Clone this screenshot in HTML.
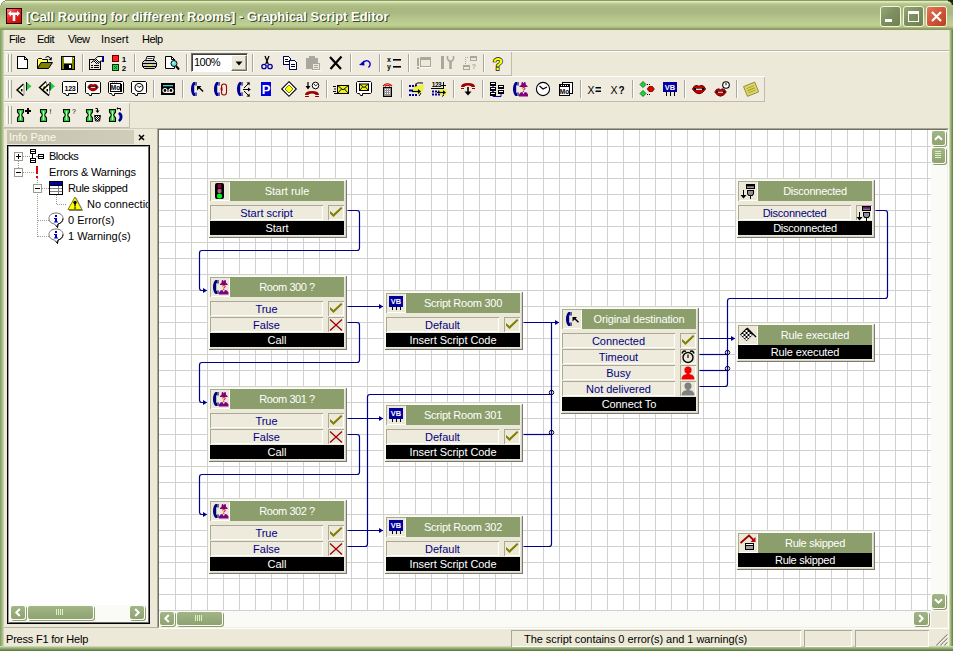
<!DOCTYPE html>
<html><head><meta charset="utf-8"><title>Graphical Script Editor</title>
<style>
*{box-sizing:border-box;margin:0;padding:0}
html,body{width:953px;height:651px;overflow:hidden}
body{position:relative;background:#ECE9D8;font-family:"Liberation Sans",sans-serif;font-size:11px;color:#000}
.abs{position:absolute}
div,svg,span{position:absolute}
svg{display:block;overflow:visible}
#title{left:0;top:0;width:953px;height:30px;background:linear-gradient(#8A9A66 0px,#8A9A66 1px,#E3F0BE 1px,#DDEAB6 2px,#C2D09A 3px,#B2C188 5px,#A9B880 8px,#A8BA81 13px,#B2C48B 17px,#BACA8E 21px,#BFD095 25px,#B4C484 27px,#A0AF72 28px,#8A9A60 29px,#8A9A60 30px)}
#ttext{left:26px;top:8px;height:17px;line-height:17px;white-space:nowrap;font-weight:bold;font-size:13px;color:#fff;text-shadow:1px 1px 0 #3f4c22,1px 0 0 rgba(63,76,34,.5);letter-spacing:0px}
.wb{top:6px;width:21px;height:21px;border:1px solid #F4F6DC;border-radius:3px;background:linear-gradient(135deg,#96A678 0%,#7F9060 45%,#6F8052 100%)}
#bclose{background:linear-gradient(135deg,#E2775A 0%,#D0553A 50%,#B8401F 100%)}
#bl{left:0;top:30px;width:4px;height:621px;background:linear-gradient(90deg,#7F9860 0,#90AA70 1px,#A4BA84 2px,#B4C696 3px,#D8E0C0 4px)}
#br{left:948px;top:30px;width:5px;height:621px;background:linear-gradient(90deg,#F2F4DE 0,#E4EACB 1px,#B9CA98 2px,#94AC72 3px,#7A955A 4px,#5F7A45 5px)}
#bb{left:0;top:646px;width:953px;height:5px;background:linear-gradient(#E4E8D0 0,#B4C696 1px,#9CB47C 2px,#86A066 3px,#6C8850 4px,#58723F 5px)}
.mi{top:29px;height:20px;line-height:20px;white-space:nowrap}
.hl{height:1px;left:4px;width:945px}
.vl{width:1px;background:#BFBCAB}
.grip{width:3px;height:18px;border-left:1px solid #fff;border-right:1px solid #ACA899;}
.sep{width:2px;height:18px;border-left:1px solid #ACA899;border-right:1px solid #fff}
.ti{width:16px;height:16px}
#canvas{left:160px;top:131px;width:771px;height:480px;background-color:#fff;
 background-image:linear-gradient(90deg,#D0D0D0 1px,transparent 1px),linear-gradient(#D0D0D0 1px,transparent 1px);background-size:16px 16px;background-position:-1px -1px;overflow:hidden}
.blk{width:139px;background:#ECE9D8;box-shadow:inset 1px 1px 0 #F7F8EC,inset -1px -1px 0 #7A7A72,inset 2px 2px 0 #FCFCF2,inset -2px -2px 0 #D8D5C4}
.blk div{position:absolute}
.bi{left:2px;top:2px;width:20px;height:20px;box-shadow:inset 1px 1px 0 #ACA899,inset -1px -1px 0 #fff}
.bh{left:22px;top:2px;width:114px;height:20px;background:#8B9E6B;color:#fff;text-align:center;line-height:20px;white-space:nowrap}
.br{left:2px;width:113px;height:15px;box-shadow:inset 1px 1px 0 #ACA899,inset -1px -1px 0 #fff;color:#000080;text-align:center;line-height:17px;white-space:nowrap;background:#EEEBDC}
.bc{left:120px;width:16px;height:15px;box-shadow:inset 1px 1px 0 #ACA899,inset -1px -1px 0 #fff}
.bf{left:2px;width:134px;height:14px;background:#000;color:#fff;text-align:center;line-height:14px;white-space:nowrap}
#conn path{fill:none;stroke:#00008C;stroke-width:1.2}
#conn .ah{fill:#00008C}
#conn .jd{fill:none;stroke:#000030;stroke-width:1}
.sb{background:#FAFAF6}
.sbtn{border-radius:3px;border:1px solid #FCFDF4;background:linear-gradient(#A3B686,#98AB7A 50%,#8FA270);box-shadow:1px 1px 0 #8C9C70}
.tr{height:16px;line-height:16px;white-space:nowrap}
.sp{top:630px;height:17px;box-shadow:inset 1px 1px 0 #ACA899,inset -1px -1px 0 #fff}
</style></head><body>
<!-- window frame -->
<div id="title"></div>
<svg style="left:0;top:0" width="6" height="6" shape-rendering="crispEdges"><rect x="0" y="0" width="5" height="1" fill="#fff"/><rect x="0" y="1" width="3" height="1" fill="#fff"/><rect x="0" y="2" width="2" height="1" fill="#fff"/><rect x="0" y="3" width="1" height="2" fill="#fff"/><rect x="3" y="1" width="2" height="1" fill="#8A9A66"/><rect x="2" y="2" width="1" height="1" fill="#8A9A66"/><rect x="1" y="3" width="1" height="2" fill="#8A9A66"/></svg>
<svg style="left:947px;top:0" width="6" height="6" shape-rendering="crispEdges"><rect x="1" y="0" width="5" height="1" fill="#1c2410"/><rect x="3" y="1" width="3" height="1" fill="#1c2410"/><rect x="4" y="2" width="2" height="1" fill="#1c2410"/><rect x="5" y="3" width="1" height="2" fill="#1c2410"/><rect x="1" y="1" width="2" height="1" fill="#7A8A56"/><rect x="3" y="2" width="1" height="1" fill="#7A8A56"/><rect x="4" y="3" width="1" height="2" fill="#7A8A56"/></svg>
<svg style="left:6px;top:8px" width="16" height="16" viewBox="0 0 16 16"><defs><linearGradient id="ig" x1="0" y1="0" x2="1" y2="1"><stop offset="0" stop-color="#f88080"/><stop offset=".45" stop-color="#e82020"/><stop offset="1" stop-color="#c80808"/></linearGradient></defs><rect width="16" height="16" fill="#200000"/><rect x="1" y="1" width="14" height="14" fill="url(#ig)"/><path d="M2 5.5 L5 2.5 L5 4.5 L11 4.5 L11 2.5 L14 5.5 L11 8.5 L11 7 L9.3 7 L9.3 13 L6.7 13 L6.7 7 L5 7 L5 8.5 Z" fill="#fff"/></svg>
<div id="ttext">[Call Routing for different Rooms] - Graphical Script Editor</div>
<div class="wb" style="left:880px"><svg width="19" height="19" style="left:0;top:0"><rect x="4" y="12" width="7" height="3" fill="#fff"/></svg></div>
<div class="wb" style="left:903px"><svg width="19" height="19" style="left:0;top:0"><rect x="4.5" y="4.5" width="10" height="10" fill="none" stroke="#fff" stroke-width="1"/><rect x="4" y="4" width="11" height="3" fill="#fff"/></svg></div>
<div class="wb" id="bclose" style="left:926px"><svg width="19" height="19" style="left:0;top:0"><path d="M5 5 L14 14 M14 5 L5 14" stroke="#fff" stroke-width="2.2"/></svg></div>
<div id="bl"></div><div id="br"></div><div id="bb"></div>

<!-- menu -->
<div class="mi" style="left:9px;letter-spacing:-0.4px">File</div>
<div class="mi" style="left:37px;letter-spacing:-0.5px">Edit</div>
<div class="mi" style="left:68px;letter-spacing:-0.6px">View</div>
<div class="mi" style="left:101px">Insert</div>
<div class="mi" style="left:142px;letter-spacing:-0.5px">Help</div>
<div class="hl" style="top:50px;background:#B8B5A4"></div>
<div class="hl" style="top:51px;background:#fff"></div>

<!-- toolbars -->
<div style="left:4px;top:52px;width:507px;height:23px;background:#EFECDF"></div>
<div style="left:4px;top:77px;width:760px;height:24px;background:#EFECDF"></div>
<div style="left:4px;top:103px;width:125px;height:24px;background:#EFECDF"></div>
<div class="hl" style="top:75px;width:508px;background:#BFBCAB"></div><div class="hl" style="top:76px;width:761px;background:#fff"></div>
<div class="hl" style="top:101px;width:761px;background:#BFBCAB"></div><div class="hl" style="top:102px;width:126px;background:#fff"></div>
<div class="hl" style="top:127px;width:126px;background:#BFBCAB"></div><div class="hl" style="top:128px;width:154px;background:#CFCCBC"></div>
<div class="vl" style="left:511px;top:52px;height:23px"></div>
<div class="vl" style="left:764px;top:77px;height:24px"></div>
<div class="vl" style="left:129px;top:103px;height:24px"></div>
<div class="grip" style="left:6px;top:54px"></div><div class="grip" style="left:9px;top:54px"></div>
<div class="grip" style="left:6px;top:80px"></div><div class="grip" style="left:9px;top:80px"></div>
<div class="grip" style="left:6px;top:106px"></div><div class="grip" style="left:9px;top:106px"></div>
<svg class="ti" width="16" height="16" viewBox="0 0 16 16" style="left:14px;top:55px" shape-rendering="crispEdges"><path d="M3.5 1.5 L10.5 1.5 L13.5 4.5 L13.5 13.5 L3.5 13.5 Z" fill="#fff" stroke="#000"/><path d="M10.5 1.5 L10.5 4.5 L13.5 4.5" fill="none" stroke="#000"/></svg>
<svg class="ti" width="16" height="16" viewBox="0 0 16 16" style="left:37px;top:55px"><path d="M0.5 13.5 L0.5 4.5 L1.5 3.5 L4.5 3.5 L5.5 4.5 L10.5 4.5 L10.5 7.5" fill="#ffff60" stroke="#000"/><path d="M0.5 13.5 L4 7.5 L15.5 7.5 L11.5 13.5 Z" fill="#808000" stroke="#000"/><path d="M8.5 2.5 Q11 0 13.5 3" fill="none" stroke="#000"/><path d="M15 2 L14.5 5.5 L11.5 4.5 Z" fill="#000"/></svg>
<svg class="ti" width="16" height="16" viewBox="0 0 16 16" style="left:60px;top:55px" shape-rendering="crispEdges"><rect x="1" y="1" width="14" height="14" fill="#000"/><rect x="2" y="2" width="12" height="12" fill="#808000"/><rect x="4" y="2" width="8" height="6" fill="#fff"/><rect x="4" y="9" width="8" height="5" fill="#000"/><rect x="9" y="10" width="2" height="3" fill="#fff"/><rect x="13" y="3" width="1" height="1" fill="#fff"/></svg>
<div class="sep" style="left:82px;top:54px"></div>
<svg class="ti" width="16" height="16" viewBox="0 0 16 16" style="left:89px;top:55px"><rect x="0.500" y="4.500" width="11" height="10" fill="#ECE9D8" stroke="#000"/><rect x="2" y="10" width="2" height="1" fill="#000"/><rect x="5" y="10" width="5" height="1" fill="#000"/><rect x="2" y="12" width="2" height="1" fill="#000"/><rect x="5" y="12" width="5" height="1" fill="#000"/><rect x="2" y="7" width="1" height="1" fill="#000"/><rect x="3" y="6" width="1" height="1" fill="#000"/><path d="M3.500 7 L7.500 2.500 L13 2.500 L13 6 L11.500 6 L9 9 Z" fill="#fff"/><path d="M3.500 7 L7.500 2.500 L9 1.500 L13 1.500 M9 9 L11.500 6 L13 6" fill="none" stroke="#000"/><rect x="7" y="4" width="1" height="1" fill="#000"/><rect x="6" y="5" width="1" height="1" fill="#000"/><rect x="8" y="5" width="1" height="1" fill="#000"/><rect x="5" y="6" width="1" height="1" fill="#000"/><rect x="7" y="6" width="1" height="1" fill="#000"/><rect x="9" y="6" width="1" height="1" fill="#000"/><rect x="6" y="7" width="1" height="1" fill="#000"/><rect x="8" y="7" width="1" height="1" fill="#000"/><rect x="7" y="8" width="1" height="1" fill="#000"/><rect x="13" y="1" width="2" height="6" fill="#000080"/></svg>
<svg class="ti" width="16" height="16" viewBox="0 0 16 16" style="left:112px;top:55px"><g shape-rendering="crispEdges"><rect x="0" y="0" width="7" height="7" fill="#600000"/><rect x="1" y="1" width="5" height="5" fill="#ff2020"/><rect x="0" y="9" width="7" height="7" fill="#003000"/><rect x="1" y="10" width="5" height="5" fill="#30d050"/></g><path d="M2 11 L5 14 M5 11 L2 14" stroke="#006010" stroke-width="1"/><text x="12" y="7" font-size="8" font-weight="bold" fill="#000" text-anchor="middle" font-family="Liberation Sans, sans-serif" >1</text><text x="12" y="16" font-size="8" font-weight="bold" fill="#000" text-anchor="middle" font-family="Liberation Sans, sans-serif" >2</text></svg>
<div class="sep" style="left:134px;top:54px"></div>
<svg class="ti" width="16" height="16" viewBox="0 0 16 16" style="left:141px;top:55px"><path d="M4.5 6 L6 1.5 L13.5 1.5 L12 6" fill="#fff" stroke="#000"/><path d="M1.5 7.5 L3.5 5.5 L13.5 5.5 L15.5 7.5 L15.5 11.5 L13.5 13.5 L3.5 13.5 L1.5 11.5 Z" fill="#c8c8c0" stroke="#000"/><path d="M1.5 8.5 L15.5 8.5 M2 11.5 L15 11.5" stroke="#000"/><rect x="7" y="9.6" width="4" height="1" fill="#ffff00"/><path d="M6.5 3.5 L11.5 3.5" stroke="#000" stroke-width=".8"/></svg>
<svg class="ti" width="16" height="16" viewBox="0 0 16 16" style="left:164px;top:55px"><path d="M1.5 1.5 L7.5 1.5 L10.5 4.5 L10.5 13.5 L1.5 13.5 Z" fill="#fff" stroke="#000"/><path d="M7.5 1.5 L7.5 4.5 L10.5 4.5" fill="none" stroke="#000"/><circle cx="10" cy="8.5" r="3" fill="#60e0e0" stroke="#000"/><circle cx="9.3" cy="7.8" r="1" fill="#c0ffff"/><path d="M12 11 L15 14.5" stroke="#000" stroke-width="2"/></svg>
<div class="sep" style="left:186px;top:54px"></div>
<div class="sep" style="left:252px;top:54px"></div>
<svg class="ti" width="16" height="16" viewBox="0 0 16 16" style="left:259px;top:55px"><path d="M6 1 L9.2 9 M10 1 L6.8 9" stroke="#000" stroke-width="1.3" fill="none"/><circle cx="5" cy="11.5" r="2.2" fill="none" stroke="#0000a0" stroke-width="1.3"/><circle cx="11" cy="11.5" r="2.2" fill="none" stroke="#0000a0" stroke-width="1.3"/></svg>
<svg class="ti" width="16" height="16" viewBox="0 0 16 16" style="left:282px;top:55px" shape-rendering="crispEdges"><path d="M1.5 1.5 L6.5 1.5 L8.5 3.5 L8.5 9.5 L1.5 9.5 Z" fill="#fff" stroke="#000060"/><path d="M7.5 5.5 L12.5 5.5 L14.5 7.5 L14.5 14.5 L7.5 14.5 Z" fill="#fff" stroke="#000060"/><rect x="3" y="4" width="3" height="1" fill="#000"/><rect x="3" y="6" width="4" height="1" fill="#000"/><rect x="9" y="9" width="4" height="1" fill="#000"/><rect x="9" y="11" width="4" height="1" fill="#000"/></svg>
<svg class="ti" width="16" height="16" viewBox="0 0 16 16" style="left:305px;top:55px" shape-rendering="crispEdges"><rect x="1" y="3" width="12" height="11" fill="#a8a8a0"/><rect x="4" y="1" width="6" height="3" fill="#a8a8a0"/><rect x="7" y="8" width="8" height="7" fill="#a8a8a0"/><rect x="8" y="9" width="6" height="5" fill="#ECE9D8"/><rect x="9" y="10" width="4" height="1" fill="#a8a8a0"/><rect x="9" y="12" width="4" height="1" fill="#a8a8a0"/><rect x="8" y="15" width="8" height="1" fill="#fff"/></svg>
<svg class="ti" width="16" height="16" viewBox="0 0 16 16" style="left:328px;top:55px"><path d="M2 2 L13 14 M13.5 1.5 L2.5 14" stroke="#000" stroke-width="2.2" fill="none"/></svg>
<div class="sep" style="left:350px;top:54px"></div>
<svg class="ti" width="16" height="16" viewBox="0 0 16 16" style="left:357px;top:55px"><path d="M5 8.500 Q9.500 3.500 12.800 7.500 Q14 10 11.500 12.500" fill="none" stroke="#0000c0" stroke-width="1.300"/><path d="M2 10 L7 5.500 L7.500 10.500 Z" fill="#0000c0"/></svg>
<div class="sep" style="left:379px;top:54px"></div>
<svg class="ti" width="16" height="16" viewBox="0 0 16 16" style="left:386px;top:55px"><text x="3" y="7" font-size="7" font-weight="bold" fill="#000" text-anchor="middle" font-family="Liberation Sans, sans-serif" >x</text><text x="3" y="14" font-size="7" font-weight="bold" fill="#000" text-anchor="middle" font-family="Liberation Sans, sans-serif" >y</text><rect x="7" y="4" width="8" height="1.6" fill="#000"/><rect x="7" y="11" width="8" height="1.6" fill="#000"/></svg>
<div class="sep" style="left:408px;top:54px"></div>
<svg class="ti" width="16" height="16" viewBox="0 0 16 16" style="left:416px;top:55px" shape-rendering="crispEdges"><rect x="4" y="2" width="11" height="10" fill="#ACA899"/><rect x="5" y="5" width="9" height="6" fill="#ECE9D8"/><rect x="1" y="3" width="2" height="8" fill="#ACA899"/><rect x="1" y="12" width="2" height="2" fill="#ACA899"/><rect x="5" y="12" width="11" height="1" fill="#fff"/></svg>
<svg class="ti" width="16" height="16" viewBox="0 0 16 16" style="left:439px;top:55px"><path d="M3.5 1 L3.5 6 M3.5 6 L3.5 14" stroke="#ACA899" stroke-width="3"/><path d="M11.5 6 L11.5 14" stroke="#ACA899" stroke-width="2.6"/><path d="M8.5 1 L8.5 4 L10 6 L13 6 L14.5 4 L14.5 1" fill="none" stroke="#ACA899" stroke-width="1.6"/></svg>
<svg class="ti" width="16" height="16" viewBox="0 0 16 16" style="left:462px;top:55px" shape-rendering="crispEdges"><rect x="8" y="1" width="7" height="5" fill="#ACA899"/><rect x="9" y="3" width="5" height="2" fill="#ECE9D8"/><rect x="1" y="10" width="7" height="5" fill="#ACA899"/><rect x="2" y="12" width="5" height="2" fill="#ECE9D8"/><rect x="3" y="2" width="1" height="1" fill="#ACA899"/><rect x="5" y="2" width="1" height="1" fill="#ACA899"/><rect x="3" y="4" width="1" height="1" fill="#ACA899"/><rect x="3" y="6" width="1" height="1" fill="#ACA899"/><rect x="3" y="8" width="1" height="1" fill="#ACA899"/><text x="12" y="14" font-size="7" font-weight="bold" fill="#ACA899" text-anchor="middle" font-family="Liberation Sans, sans-serif" >?</text></svg>
<div class="sep" style="left:483px;top:54px"></div>
<svg class="ti" width="16" height="16" viewBox="0 0 16 16" style="left:490px;top:55px"><text x="8" y="14.5" font-size="17" font-weight="bold" fill="#ffff00" stroke="#000" stroke-width="1.3" paint-order="stroke" text-anchor="middle" font-family="Liberation Sans, sans-serif">?</text></svg>
<svg class="ti" width="16" height="16" viewBox="0 0 16 16" style="left:16px;top:81px"><path d="M1 9 L7.5 3 L7.5 14.6 Z" fill="#f4f4a8"/><path d="M4.8 5.6 L7.5 3 L7.5 14.6 L4.8 12.2 Z" fill="#fff"/><path d="M7.5 3 L1 9 L7.5 14.6" fill="none" stroke="#000" stroke-width="1.400"/><path d="M8 3.5 L8 14" stroke="#909090" stroke-width="1"/><rect x="5" y="8" width="1.5" height="2.4" fill="#000"/><path d="M10.5 1 L15.5 5.300 L10.5 9.600 Z" fill="#20d040"/><path d="M10.5 1 L10.5 9.600" stroke="#000" stroke-width="1"/></svg>
<svg class="ti" width="16" height="16" viewBox="0 0 16 16" style="left:39px;top:81px"><path d="M0.5 6.5 L7.0 0.5 L7.0 12.1 Z" fill="#f4f4a8"/><path d="M4.3 3.0999999999999996 L7.0 0.5 L7.0 12.1 L4.3 9.7 Z" fill="#fff"/><path d="M7.0 0.5 L0.5 6.5 L7.0 12.1" fill="none" stroke="#000" stroke-width="1.400"/><path d="M7.5 1.0 L7.5 11.5" stroke="#909090" stroke-width="1"/><rect x="4.5" y="5.5" width="1.5" height="2.4" fill="#000"/><path d="M3.5 9 L10.0 3 L10.0 14.6 Z" fill="#f4f4a8"/><path d="M7.3 5.6 L10.0 3 L10.0 14.6 L7.3 12.2 Z" fill="#fff"/><path d="M10.0 3 L3.5 9 L10.0 14.6" fill="none" stroke="#000" stroke-width="1.400"/><path d="M10.5 3.5 L10.5 14" stroke="#909090" stroke-width="1"/><rect x="7.5" y="8" width="1.5" height="2.4" fill="#000"/><path d="M11 1 L16 5.300 L11 9.600 Z" fill="#20d040"/><path d="M11 1 L11 9.600" stroke="#000" stroke-width="1"/></svg>
<svg class="ti" width="16" height="16" viewBox="0 0 16 16" style="left:62px;top:81px"><path d="M1.5 0.5 L14.5 0.5 L15.5 1.5 L15.5 11.5 L14.5 12.5 L6.5 12.5 L6.5 14.5 L4.5 14.5 L3.5 12.5 L1.5 12.5 L0.5 11.5 L0.5 1.5 Z" fill="#fff" stroke="#000" stroke-width="1"/><text x="8" y="9.5" font-size="7" font-weight="bold" fill="#000" text-anchor="middle" font-family="Liberation Sans, sans-serif" letter-spacing="-0.3">123</text></svg>
<svg class="ti" width="16" height="16" viewBox="0 0 16 16" style="left:85px;top:81px"><path d="M1.5 0.5 L14.5 0.5 L15.5 1.5 L15.5 11.5 L14.5 12.5 L6.5 12.5 L6.5 14.5 L4.5 14.5 L3.5 12.5 L1.5 12.5 L0.5 11.5 L0.5 1.5 Z" fill="#fff" stroke="#000" stroke-width="1"/><g transform="translate(8,6.2) scale(0.95)"><path d="M-5.5 0 Q-4 -3.5 -1.5 -3 L0 -2.2 L1.5 -3 Q4 -3.5 5.5 0 Q3 4 0 4 Q-3 4 -5.5 0 Z" fill="#c00000" stroke="#600000" stroke-width=".8"/><path d="M-4 0 L4 0" stroke="#000" stroke-width="1.6"/><path d="M-2.5 0.2 L2.5 0.2" stroke="#fff" stroke-width="1"/></g></svg>
<svg class="ti" width="16" height="16" viewBox="0 0 16 16" style="left:108px;top:81px"><path d="M1.5 0.5 L14.5 0.5 L15.5 1.5 L15.5 11.5 L14.5 12.5 L6.5 12.5 L6.5 14.5 L4.5 14.5 L3.5 12.5 L1.5 12.5 L0.5 11.5 L0.5 1.5 Z" fill="#fff" stroke="#000" stroke-width="1"/><rect x="2.5" y="2.5" width="10" height="8" fill="none" stroke="#000"/><rect x="4" y="1.6" width="1" height="1" fill="#000"/><rect x="6" y="1.6" width="1" height="1" fill="#000"/><rect x="8" y="1.6" width="1" height="1" fill="#000"/><rect x="13" y="3" width="1" height="8" fill="#000"/><text x="7.5" y="9.3" font-size="6.5" font-weight="bold" fill="#000" text-anchor="middle" font-family="Liberation Sans, sans-serif" >Mo</text></svg>
<svg class="ti" width="16" height="16" viewBox="0 0 16 16" style="left:131px;top:81px"><path d="M1.5 0.5 L14.5 0.5 L15.5 1.5 L15.5 11.5 L14.5 12.5 L6.5 12.5 L6.5 14.5 L4.5 14.5 L3.5 12.5 L1.5 12.5 L0.5 11.5 L0.5 1.5 Z" fill="#fff" stroke="#000" stroke-width="1"/><circle cx="8" cy="6.5" r="4" fill="#fff" stroke="#000" stroke-width="1.1"/><path d="M6 4.5 L8 6.5 L10.5 5" fill="none" stroke="#000" stroke-width="1"/></svg>
<div class="sep" style="left:153px;top:80px"></div>
<svg class="ti" width="16" height="16" viewBox="0 0 16 16" style="left:160px;top:81px"><rect x="1" y="2" width="14" height="12" fill="#000"/><rect x="3" y="4" width="10" height="1.3" fill="#40d0d0"/><circle cx="5" cy="9.5" r="2" fill="#000" stroke="#fff" stroke-width="1.2"/><circle cx="11" cy="9.5" r="2" fill="#000" stroke="#fff" stroke-width="1.2"/><rect x="5" y="11" width="6" height="1" fill="#fff"/></svg>
<div class="sep" style="left:182px;top:80px"></div>
<svg class="ti" width="16" height="16" viewBox="0 0 16 16" style="left:189px;top:81px"><path d="M6 1 L4.500 1 C1.200 3.500 1.200 12.500 4.500 15 L6 15 L6 12.200 L5.200 11.200 L5.200 4.800 L6 3.800 Z" fill="#000090"/><rect x="6.4" y="1" width="1.2" height="3.6" fill="#000090"/><rect x="6.4" y="11.4" width="1.2" height="3.6" fill="#000090"/><path d="M8 5 L12.5 5 L11 6.5 L14.6 10.1 L13.6 11.1 L10 7.5 L8 9.5 Z" fill="#000"/></svg>
<svg class="ti" width="16" height="16" viewBox="0 0 16 16" style="left:212px;top:81px"><path d="M6 1 L4.500 1 C1.200 3.500 1.200 12.500 4.500 15 L6 15 L6 12.200 L5.200 11.200 L5.200 4.800 L6 3.800 Z" fill="#000090"/><rect x="6.4" y="1" width="1.2" height="3.6" fill="#000090"/><rect x="6.4" y="11.4" width="1.2" height="3.6" fill="#000090"/><rect x="9.5" y="3" width="5" height="11" rx="2.5" fill="none" stroke="#a00000" stroke-width="1.1"/><path d="M8 8 L10.5 6 L10.5 10 Z" fill="#a00000"/></svg>
<svg class="ti" width="16" height="16" viewBox="0 0 16 16" style="left:235px;top:81px"><path d="M6 1 L4.500 1 C1.200 3.500 1.200 12.500 4.500 15 L6 15 L6 12.200 L5.200 11.200 L5.200 4.800 L6 3.800 Z" fill="#000090"/><rect x="6.4" y="1" width="1.2" height="3.6" fill="#000090"/><rect x="6.4" y="11.4" width="1.2" height="3.6" fill="#000090"/><path d="M8 8.5 L14.5 8.5 M9 7 L14 2 M9 10 L14 15" stroke="#000" stroke-width="1" fill="none"/><path d="M15.8 8.5 L13 6.5 L13 10.5 Z M14.8 1.2 L11.5 1.5 L14.5 4.5 Z M14.8 15.8 L11.5 15.5 L14.5 12.5 Z" fill="#000"/></svg>
<svg class="ti" width="16" height="16" viewBox="0 0 16 16" style="left:258px;top:81px"><rect x="3" y="1" width="10" height="14" fill="#0000e0"/><text x="8.2" y="12.5" font-size="13" font-weight="bold" fill="#fff" text-anchor="middle" font-family="Liberation Sans, sans-serif" >P</text></svg>
<svg class="ti" width="16" height="16" viewBox="0 0 16 16" style="left:281px;top:81px"><path d="M8 0.7 L15.3 8 L8 15.3 L0.7 8 Z" fill="#fff" stroke="#000" stroke-width="1.1"/><path d="M8 4 L12 8 L8 12 L4 8 Z" fill="#ffff00" stroke="#404000" stroke-width=".7"/></svg>
<svg class="ti" width="16" height="16" viewBox="0 0 16 16" style="left:304px;top:81px"><path d="M1 14 Q1 10 8 10 Q15 10 15 14 L11.5 14 Q11.5 12.4 8 12.4 Q4.500 12.4 4.5 14 Z" fill="#a00000"/><rect x="1" y="15" width="4" height="1" fill="#a00000"/><rect x="11" y="15" width="4" height="1" fill="#a00000"/><circle cx="11.5" cy="4.5" r="3.3" fill="#fff" stroke="#000" stroke-width="1"/><path d="M10 3 L11.5 4.8 L13.5 3.6" fill="none" stroke="#000" stroke-width=".9"/><path d="M4 1 L4 7" stroke="#000" stroke-width="1.2"/><path d="M1.5 5 L6.5 5 L4 8.5 Z" fill="#000"/></svg>
<div class="sep" style="left:326px;top:80px"></div>
<svg class="ti" width="16" height="16" viewBox="0 0 16 16" style="left:333px;top:81px"><rect x="4.5" y="4.5" width="11" height="8" fill="#f0f020" stroke="#000" stroke-width="1"/><path d="M4.5 4.5 L10.0 8.9 L15.5 4.5 M4.5 12.5 L8.68 7.859999999999999 M15.5 12.5 L11.32 7.859999999999999" fill="none" stroke="#000" stroke-width=".9"/><rect x="0" y="5" width="3" height="1" fill="#000"/><rect x="1" y="7.5" width="2" height="1" fill="#000"/><rect x="0" y="10" width="3" height="1" fill="#000"/><rect x="1" y="12" width="3" height="1" fill="#000"/></svg>
<svg class="ti" width="16" height="16" viewBox="0 0 16 16" style="left:356px;top:81px"><path d="M1.5 0.5 L14.5 0.5 L15.5 1.5 L15.5 11.5 L14.5 12.5 L6.5 12.5 L6.5 14.5 L4.5 14.5 L3.5 12.5 L1.5 12.5 L0.5 11.5 L0.5 1.5 Z" fill="#fff" stroke="#000" stroke-width="1"/><rect x="3.5" y="3" width="9" height="6.5" fill="#f0f020" stroke="#000" stroke-width="1"/><path d="M3.5 3 L8.0 6.575 L12.5 3 M3.5 9.5 L6.92 5.73 M12.5 9.5 L9.08 5.73" fill="none" stroke="#000" stroke-width=".9"/></svg>
<svg class="ti" width="16" height="16" viewBox="0 0 16 16" style="left:379px;top:81px"><rect x="4" y="6" width="9" height="10" fill="#000"/><rect x="5" y="7" width="7" height="8" fill="#909090"/><rect x="6" y="8" width="1" height="1" fill="#fff"/><rect x="6" y="10" width="1" height="1" fill="#fff"/><rect x="6" y="12" width="1" height="1" fill="#fff"/><rect x="8" y="8" width="1" height="1" fill="#fff"/><rect x="8" y="10" width="1" height="1" fill="#fff"/><rect x="8" y="12" width="1" height="1" fill="#fff"/><rect x="10" y="8" width="1" height="1" fill="#fff"/><rect x="10" y="10" width="1" height="1" fill="#fff"/><rect x="10" y="12" width="1" height="1" fill="#fff"/><path d="M4 5 Q8.5 0.5 13 5 M6 5.5 Q8.5 3 11 5.500" fill="none" stroke="#c00000" stroke-width="1.1"/></svg>
<div class="sep" style="left:401px;top:80px"></div>
<svg class="ti" width="16" height="16" viewBox="0 0 16 16" style="left:408px;top:81px"><rect x="1" y="4" width="2" height="2" fill="#0000a0"/><rect x="4" y="4" width="2" height="2" fill="#0000a0"/><rect x="7" y="4" width="2" height="2" fill="#0000a0"/><rect x="1" y="13" width="2" height="2" fill="#0000a0"/><rect x="4" y="13" width="2" height="2" fill="#0000a0"/><rect x="7" y="13" width="2" height="2" fill="#0000a0"/><rect x="1" y="8.5" width="5" height="2" fill="#0000a0"/><path d="M7 3.500 Q9 1 15 2 M7 6 L8.500 3.500" stroke="#000" fill="none"/><path d="M6 6 L15.5 3 L15.5 9 L12 13 L9 13 L9 10 L5 10 L5 8 Z" fill="#f0f040"/><path d="M4 10.5 L11 10.5" stroke="#000" stroke-width="1.2"/><path d="M13 10.5 L10 8 L10 13 Z" fill="#000"/><path d="M11 15 L13 12" stroke="#000"/></svg>
<svg class="ti" width="16" height="16" viewBox="0 0 16 16" style="left:431px;top:81px"><text x="5.5" y="5.5" font-size="6.5" font-weight="bold" fill="#000" text-anchor="middle" font-family="Liberation Sans, sans-serif" letter-spacing="-0.4">123</text><rect x="0" y="7" width="12" height="1" fill="#000"/><rect x="12" y="1" width="1" height="10" fill="#000"/><rect x="10" y="4" width="5" height="1" fill="#000"/><rect x="1" y="9.5" width="2" height="2" fill="#0000a0"/><rect x="1" y="12.5" width="2" height="2" fill="#0000a0"/><rect x="4" y="9.5" width="2" height="2" fill="#0000a0"/><rect x="4" y="12.5" width="2" height="2" fill="#0000a0"/><rect x="7" y="9.5" width="2" height="2" fill="#0000a0"/><rect x="7" y="12.5" width="2" height="2" fill="#0000a0"/><path d="M8 8 L15.5 8 L15.5 14 L9 14 Z" fill="#f0f040"/><path d="M6 11.500 L13 11.500" stroke="#000" stroke-width="1.2"/><path d="M15 11.500 L12 9.300 L12 13.700 Z" fill="#000"/><path d="M11 15.500 L13 14" stroke="#000"/></svg>
<div class="sep" style="left:453px;top:80px"></div>
<svg class="ti" width="16" height="16" viewBox="0 0 16 16" style="left:460px;top:81px"><path d="M1 6 Q1 2 8 2 Q15 2 15 6 L11.5 6 Q11.5 4.4 8 4.4 Q4.500 4.4 4.5 6 Z" fill="#a00000"/><rect x="1" y="7" width="3" height="1" fill="#a00000"/><rect x="12" y="7" width="3" height="1" fill="#a00000"/><path d="M8 6 L8 11" stroke="#000" stroke-width="1.6"/><path d="M4.5 10.5 L11.5 10.5 L8 14.500 Z" fill="#000"/></svg>
<div class="sep" style="left:482px;top:80px"></div>
<svg class="ti" width="16" height="16" viewBox="0 0 16 16" style="left:489px;top:81px"><g shape-rendering="crispEdges"><rect x="1" y="1" width="6" height="4" fill="#000"/><rect x="2" y="2" width="4" height="1" fill="#fff"/></g><g shape-rendering="crispEdges"><rect x="1" y="6" width="6" height="4" fill="#000"/><rect x="2" y="7" width="4" height="1" fill="#fff"/></g><g shape-rendering="crispEdges"><rect x="1" y="11" width="6" height="4" fill="#000"/><rect x="2" y="12" width="4" height="1" fill="#fff"/></g><g shape-rendering="crispEdges"><rect x="9" y="4" width="6" height="4" fill="#000"/><rect x="10" y="5" width="4" height="1" fill="#fff"/></g><g shape-rendering="crispEdges"><rect x="9" y="9" width="6" height="4" fill="#000"/><rect x="10" y="10" width="4" height="1" fill="#fff"/></g><path d="M4 4.5 L4 6 M4 14.500 L4 15.500 L12 15.500 L12 13" stroke="#0000c0" fill="none"/><path d="M2.500 9.500 L5.500 9.500 L4 11.500 Z" fill="#0000c0"/></svg>
<svg class="ti" width="16" height="16" viewBox="0 0 16 16" style="left:512px;top:81px"><g transform="translate(-1,0)"><path d="M6 1 L4.500 1 C1.200 3.500 1.200 12.500 4.500 15 L6 15 L6 12.200 L5.200 11.200 L5.200 4.800 L6 3.800 Z" fill="#000090"/><rect x="6.4" y="1" width="1.2" height="3.6" fill="#000090"/><rect x="6.4" y="11.4" width="1.2" height="3.6" fill="#000090"/></g><path d="M7.500 6 L15.500 6 L15.500 5 L14 4 L13.400 1 L12.400 1 L11.600 2.500 L10.800 1 L9.800 1 L9.200 4 L7.500 5 Z" fill="#800080"/><text x="11.6" y="11.3" font-size="7" font-weight="bold" fill="#d00000" text-anchor="middle" font-family="Liberation Sans, sans-serif" >?</text><path d="M7 15.500 L7 13.500 L8.500 11.500 L10.500 11 L11.600 13.200 L12.800 11 L14.800 11.500 L16 13.500 L16 15.500 Z" fill="#800080"/></svg>
<svg class="ti" width="16" height="16" viewBox="0 0 16 16" style="left:535px;top:81px"><circle cx="8" cy="8" r="6.6" fill="#fff" stroke="#000" stroke-width="1.1"/><path d="M4.500 5 L8 8 L12 6" fill="none" stroke="#000" stroke-width="1.1"/></svg>
<svg class="ti" width="16" height="16" viewBox="0 0 16 16" style="left:558px;top:81px"><rect x="4.500" y="1.500" width="10" height="11" fill="#fff" stroke="#000"/><rect x="1.500" y="3.500" width="10" height="11" fill="#fff" stroke="#000"/><rect x="2" y="4" width="9" height="2" fill="#000"/><rect x="3" y="4" width="1" height="1" fill="#fff"/><rect x="5" y="4" width="1" height="1" fill="#fff"/><rect x="7" y="4" width="1" height="1" fill="#fff"/><rect x="9" y="4" width="1" height="1" fill="#fff"/><text x="6.5" y="13" font-size="6.5" font-weight="bold" fill="#000" text-anchor="middle" font-family="Liberation Sans, sans-serif" >Mo</text></svg>
<div class="sep" style="left:580px;top:80px"></div>
<svg class="ti" width="16" height="16" viewBox="0 0 16 16" style="left:587px;top:81px"><text x="4" y="12.5" font-size="10.5" font-weight="normal" fill="#000" text-anchor="middle" font-family="Liberation Sans, sans-serif" >X</text><rect x="8.5" y="6" width="5.5" height="1.5" fill="#000"/><rect x="8.5" y="9.5" width="5.5" height="1.5" fill="#000"/></svg>
<svg class="ti" width="16" height="16" viewBox="0 0 16 16" style="left:610px;top:81px"><text x="4" y="12.5" font-size="10.5" font-weight="normal" fill="#000" text-anchor="middle" font-family="Liberation Sans, sans-serif" >X</text><text x="11.5" y="12.5" font-size="10" font-weight="bold" fill="#000" text-anchor="middle" font-family="Liberation Sans, sans-serif" >?</text></svg>
<div class="sep" style="left:632px;top:80px"></div>
<svg class="ti" width="16" height="16" viewBox="0 0 16 16" style="left:639px;top:81px"><path d="M4 0.5 L7 3.5 L4 6.5 L1 3.5 Z" fill="#20d040" stroke="#006000" stroke-width=".8"/><path d="M4 9.5 L7 12.5 L4 15.5 L1 12.5 Z" fill="#20d040" stroke="#006000" stroke-width=".8"/><path d="M10 5.500 L13.500 5.500 L15.300 8 L13.500 10.500 L10 10.500 L8.300 8 Z" fill="#e00000" stroke="#600000" stroke-width=".8"/><rect x="8" y="3" width="1" height="1" fill="#000"/><rect x="10" y="3" width="1" height="1" fill="#000"/><rect x="8" y="13" width="1" height="1" fill="#000"/><rect x="10" y="13" width="1" height="1" fill="#000"/></svg>
<svg class="ti" width="16" height="16" viewBox="0 0 16 16" style="left:662px;top:81px"><rect x="1" y="1" width="14" height="10" fill="#0000a0"/><text x="8" y="9" font-size="7.5" font-weight="bold" fill="#fff" text-anchor="middle" font-family="Liberation Sans, sans-serif" >VB</text><rect x="4" y="11" width="1" height="4" fill="#000"/><rect x="8" y="11" width="1" height="4" fill="#000"/><rect x="12" y="11" width="1" height="4" fill="#000"/></svg>
<div class="sep" style="left:684px;top:80px"></div>
<svg class="ti" width="16" height="16" viewBox="0 0 16 16" style="left:691px;top:81px"><g transform="translate(8,8) scale(1.2)"><path d="M-5.5 0 Q-4 -3.5 -1.5 -3 L0 -2.2 L1.5 -3 Q4 -3.5 5.5 0 Q3 4 0 4 Q-3 4 -5.5 0 Z" fill="#c00000" stroke="#600000" stroke-width=".8"/><path d="M-4 0 L4 0" stroke="#000" stroke-width="1.6"/><path d="M-2.5 0.2 L2.5 0.2" stroke="#fff" stroke-width="1"/></g></svg>
<svg class="ti" width="16" height="16" viewBox="0 0 16 16" style="left:714px;top:81px"><g transform="translate(6.5,11) scale(1.05)"><path d="M-5.5 0 Q-4 -3.5 -1.5 -3 L0 -2.2 L1.5 -3 Q4 -3.5 5.5 0 Q3 4 0 4 Q-3 4 -5.5 0 Z" fill="#c00000" stroke="#600000" stroke-width=".8"/><path d="M-4 0 L4 0" stroke="#000" stroke-width="1.6"/><path d="M-2.5 0.2 L2.5 0.2" stroke="#fff" stroke-width="1"/></g><circle cx="12" cy="4" r="3.300" fill="#fff" stroke="#000" stroke-width="1.100"/><path d="M12 2 L12 4.300" stroke="#000" stroke-width="1"/></svg>
<div class="sep" style="left:736px;top:80px"></div>
<svg class="ti" width="16" height="16" viewBox="0 0 16 16" style="left:743px;top:81px"><g transform="rotate(-22 8 8)"><rect x="2" y="3" width="12" height="10.500" fill="#e0d860" stroke="#808040" stroke-width=".8"/><path d="M4 6 L12 6 M4 8.300 L12 8.300 M4 10.600 L12 10.600" stroke="#a09830" stroke-width=".9"/></g></svg>
<svg class="ti" width="16" height="16" viewBox="0 0 16 16" style="left:16px;top:107px"><path d="M1.500 2.500 L7.500 2.500 L7.500 5 L5.500 8 L7.500 11 L7.500 14.500 L1.500 14.500 L1.500 11 L3.500 8 L1.500 5 Z" fill="#20d030" stroke="#000" stroke-width="1.100"/><path d="M3.800 4 L5.200 4 L5.200 13 L3.800 13 Z" fill="#b0ffb0"/><rect x="9" y="3" width="6" height="2" fill="#000"/><rect x="11" y="1" width="2" height="6" fill="#000"/></svg>
<svg class="ti" width="16" height="16" viewBox="0 0 16 16" style="left:39px;top:107px"><path d="M1.500 2.500 L7.500 2.500 L7.500 5 L5.500 8 L7.500 11 L7.500 14.500 L1.500 14.500 L1.500 11 L3.500 8 L1.500 5 Z" fill="#20d030" stroke="#000" stroke-width="1.100"/><path d="M3.800 4 L5.200 4 L5.200 13 L3.800 13 Z" fill="#b0ffb0"/><text x="11.5" y="6.5" font-size="7" font-weight="normal" fill="#000" text-anchor="middle" font-family="Liberation Sans, sans-serif" >!</text></svg>
<svg class="ti" width="16" height="16" viewBox="0 0 16 16" style="left:62px;top:107px"><path d="M1.500 2.500 L7.500 2.500 L7.500 5 L5.500 8 L7.500 11 L7.500 14.500 L1.500 14.500 L1.500 11 L3.500 8 L1.500 5 Z" fill="#20d030" stroke="#000" stroke-width="1.100"/><path d="M3.800 4 L5.200 4 L5.200 13 L3.800 13 Z" fill="#b0ffb0"/><text x="12" y="6.5" font-size="7" font-weight="normal" fill="#000" text-anchor="middle" font-family="Liberation Sans, sans-serif" >?</text></svg>
<svg class="ti" width="16" height="16" viewBox="0 0 16 16" style="left:85px;top:107px"><path d="M1.500 2.500 L7.500 2.500 L7.500 5 L5.500 8 L7.500 11 L7.500 14.500 L1.500 14.500 L1.500 11 L3.500 8 L1.500 5 Z" fill="#20d030" stroke="#000" stroke-width="1.100"/><path d="M3.800 4 L5.200 4 L5.200 13 L3.800 13 Z" fill="#b0ffb0"/><path d="M9.500 8.500 L15.500 8.500 L14.500 14 L10.500 14 Z" fill="#fff" stroke="#000" stroke-width="1"/><rect x="10" y="9" width="1" height="1" fill="#000"/><rect x="12" y="9" width="1" height="1" fill="#000"/><rect x="14" y="9" width="1" height="1" fill="#000"/><rect x="11" y="10" width="1" height="1" fill="#000"/><rect x="13" y="10" width="1" height="1" fill="#000"/><rect x="10" y="11" width="1" height="1" fill="#000"/><rect x="12" y="11" width="1" height="1" fill="#000"/><rect x="14" y="11" width="1" height="1" fill="#000"/><rect x="11" y="12" width="1" height="1" fill="#000"/><rect x="13" y="12" width="1" height="1" fill="#000"/><rect x="12" y="13" width="1" height="1" fill="#000"/><path d="M10.500 1.500 L12.500 1.500 L12.500 4" stroke="#000" fill="none"/><path d="M10.500 3.500 L14.500 3.500 L12.500 6 Z" fill="#000"/></svg>
<svg class="ti" width="16" height="16" viewBox="0 0 16 16" style="left:108px;top:107px"><path d="M1.500 2.500 L7.500 2.500 L7.500 5 L5.500 8 L7.500 11 L7.500 14.500 L1.500 14.500 L1.500 11 L3.500 8 L1.500 5 Z" fill="#20d030" stroke="#000" stroke-width="1.100"/><path d="M3.800 4 L5.200 4 L5.200 13 L3.800 13 Z" fill="#b0ffb0"/><path d="M11.500 5 C15.500 6 15.500 13 11.500 15 L10 13 C12 12 12 8 10 7 Z" fill="#000090"/><path d="M9.500 1.500 L12.500 1.500 L12.500 3.500" stroke="#000" fill="none"/><path d="M10 0 L10 3 L8.500 1.500 Z" fill="#000"/></svg>
<div style="left:191px;top:53px;width:57px;height:19px;background:#fff;border:1px solid;border-color:#716F64 #fff #fff #716F64;box-shadow:inset 1px 1px 0 #404040"></div>
<div style="left:194px;top:55px;height:15px;line-height:15px;font-size:11px;letter-spacing:-0.5px">100%</div>
<div style="left:231px;top:55px;width:16px;height:16px;background:#ECE9D8;border:1px solid;border-color:#fff #716F64 #716F64 #fff;box-shadow:inset -1px -1px 0 #ACA899"></div>
<svg style="left:235px;top:61px" width="8" height="5"><path d="M0.500 0.500 L7.500 0.500 L4 4.500 Z" fill="#000"/></svg>

<!-- info pane -->
<div style="left:7px;top:130px;width:127px;height:14px;background:linear-gradient(90deg,#C5C3AB,#D0CEBA);color:#FAFAF0;line-height:14px;font-size:11px;padding-left:2px">Info Pane</div>
<svg style="left:138px;top:134px" width="8" height="8"><path d="M1 1 L6 6 M6 1 L1 6" stroke="#000" stroke-width="1.5"/></svg>
<div id="tree" style="left:7px;top:145px;width:143px;height:479px;background:#fff;border:1px solid #000;box-shadow:inset 1px 1px 0 #9A9A9A,inset -1px -1px 0 #6A6A6A;overflow:hidden">
<div style="left:1px;top:1px;width:139px;height:457px;overflow:hidden"><div style="left:-9px;top:-147px;width:200px;height:651px"><div style="left:18px;top:161px;width:1px;height:7px;background:repeating-linear-gradient(#9c9a8c 0,#9c9a8c 1px,transparent 1px,transparent 2px)"></div>
<div style="left:23px;top:156px;width:7px;height:1px;background:repeating-linear-gradient(90deg,#9c9a8c 0,#9c9a8c 1px,transparent 1px,transparent 2px)"></div>
<div style="left:23px;top:172px;width:12px;height:1px;background:repeating-linear-gradient(90deg,#9c9a8c 0,#9c9a8c 1px,transparent 1px,transparent 2px)"></div>
<div style="left:37px;top:178px;width:1px;height:59px;background:repeating-linear-gradient(#9c9a8c 0,#9c9a8c 1px,transparent 1px,transparent 2px)"></div>
<div style="left:42px;top:188px;width:7px;height:1px;background:repeating-linear-gradient(90deg,#9c9a8c 0,#9c9a8c 1px,transparent 1px,transparent 2px)"></div>
<div style="left:56px;top:195px;width:1px;height:10px;background:repeating-linear-gradient(#9c9a8c 0,#9c9a8c 1px,transparent 1px,transparent 2px)"></div>
<div style="left:57px;top:204px;width:10px;height:1px;background:repeating-linear-gradient(90deg,#9c9a8c 0,#9c9a8c 1px,transparent 1px,transparent 2px)"></div>
<div style="left:38px;top:220px;width:11px;height:1px;background:repeating-linear-gradient(90deg,#9c9a8c 0,#9c9a8c 1px,transparent 1px,transparent 2px)"></div>
<div style="left:38px;top:236px;width:11px;height:1px;background:repeating-linear-gradient(90deg,#9c9a8c 0,#9c9a8c 1px,transparent 1px,transparent 2px)"></div>
<svg style="left:14px;top:152px" width="9" height="9" shape-rendering="crispEdges"><rect x=".5" y=".5" width="8" height="8" fill="#fff" stroke="#9c9a8c"/><rect x="2" y="4" width="5" height="1" fill="#000"/><rect x="4" y="2" width="1" height="5" fill="#000"/></svg>
<svg style="left:14px;top:168px" width="9" height="9" shape-rendering="crispEdges"><rect x=".5" y=".5" width="8" height="8" fill="#fff" stroke="#9c9a8c"/><rect x="2" y="4" width="5" height="1" fill="#000"/></svg>
<svg style="left:33px;top:184px" width="9" height="9" shape-rendering="crispEdges"><rect x=".5" y=".5" width="8" height="8" fill="#fff" stroke="#9c9a8c"/><rect x="2" y="4" width="5" height="1" fill="#000"/></svg>
<svg style="left:29px;top:149px" width="16" height="14" shape-rendering="crispEdges"><rect x="1" y="0" width="6" height="5" fill="#000"/><rect x="2" y="1" width="4" height="1" fill="#fff"/><rect x="2" y="3" width="4" height="1" fill="#fff"/><rect x="1" y="9" width="6" height="5" fill="#000"/><rect x="2" y="10" width="4" height="1" fill="#fff"/><rect x="2" y="12" width="4" height="1" fill="#fff"/><rect x="9" y="5" width="6" height="5" fill="#000"/><rect x="10" y="6" width="4" height="1" fill="#fff"/><rect x="10" y="8" width="4" height="1" fill="#fff"/><rect x="3" y="5" width="1" height="4" fill="#000"/><rect x="7" y="7" width="2" height="1" fill="#808080"/></svg>
<svg style="left:35px;top:166px" width="4" height="12" shape-rendering="crispEdges"><rect x="1" y="0" width="2" height="8" fill="#e00000"/><rect x="1" y="10" width="2" height="2" fill="#e00000"/></svg>
<svg style="left:49px;top:181px" width="14" height="14" shape-rendering="crispEdges"><rect width="14" height="14" fill="#000"/><rect x="1" y="1" width="12" height="3" fill="#0000a0"/><rect x="1" y="5" width="12" height="8" fill="#fff"/><rect x="1" y="7" width="12" height="1" fill="#808080"/><rect x="1" y="10" width="12" height="1" fill="#808080"/><rect x="9" y="5" width="1" height="8" fill="#808080"/></svg>
<svg style="left:67px;top:196px" width="16" height="15"><path d="M8 1 L15 13.500 L1 13.500 Z" fill="#ffff00" stroke="#808000" stroke-width="1" stroke-linejoin="round"/><path d="M2 14.500 L15.500 14.500 L9 2" fill="none" stroke="#808080" stroke-width="1"/><circle cx="8" cy="6.500" r="1.700" fill="#000"/><rect x="7.400" y="7" width="1.300" height="3.500" fill="#000"/><rect x="7.300" y="11.300" width="1.500" height="1.400" fill="#000"/></svg>
<svg style="left:48px;top:212px" width="16" height="16"><path d="M8 1 C12.5 1 15 3.500 15 6.500 C15 9.500 12.500 11.500 10 12 L9.500 15.500 L6.500 12 C3 11.500 1 9.500 1 6.500 C1 3.500 3.500 1 8 1 Z" fill="#fff" stroke="#707070" stroke-width="1"/><path d="M10 12 L9.500 15.500 L8 13.500 M15 6.500 C15 9.500 12.500 11.500 10 12" fill="none" stroke="#000" stroke-width="1"/><rect x="7" y="3" width="2" height="2" fill="#0000c0"/><rect x="6" y="6" width="3" height="1" fill="#0000c0"/><rect x="7" y="6" width="2" height="4" fill="#0000c0"/><rect x="6" y="9.500" width="4" height="1" fill="#0000c0"/></svg>
<svg style="left:48px;top:228px" width="16" height="16"><path d="M8 1 C12.5 1 15 3.500 15 6.500 C15 9.500 12.500 11.500 10 12 L9.500 15.500 L6.500 12 C3 11.500 1 9.500 1 6.500 C1 3.500 3.500 1 8 1 Z" fill="#fff" stroke="#707070" stroke-width="1"/><path d="M10 12 L9.500 15.500 L8 13.500 M15 6.500 C15 9.500 12.500 11.500 10 12" fill="none" stroke="#000" stroke-width="1"/><rect x="7" y="3" width="2" height="2" fill="#0000c0"/><rect x="6" y="6" width="3" height="1" fill="#0000c0"/><rect x="7" y="6" width="2" height="4" fill="#0000c0"/><rect x="6" y="9.500" width="4" height="1" fill="#0000c0"/></svg>
<div class="tr" style="left:49px;top:148px;letter-spacing:-0.55px">Blocks</div>
<div class="tr" style="left:49px;top:164px;letter-spacing:-0.15px">Errors &amp; Warnings</div>
<div class="tr" style="left:68px;top:180px;letter-spacing:-0.33px">Rule skipped</div>
<div class="tr" style="left:87px;top:196px;letter-spacing:0px">No connection</div>
<div class="tr" style="left:68px;top:212px;letter-spacing:0px">0 Error(s)</div>
<div class="tr" style="left:68px;top:228px;letter-spacing:0px">1 Warning(s)</div></div></div>
</div>

<!-- canvas pane -->
<div style="left:157px;top:128px;width:792px;height:501px;border:1px solid;border-color:#ACA899 #fff #fff #ACA899"></div>
<div style="left:158px;top:129px;width:790px;height:499px;border:1px solid;border-color:#716F64 #F1EFE2 #F1EFE2 #716F64;background:#fff"></div>
<div id="canvas"></div>
<div style="left:159px;top:131px;width:1px;height:480px;background-image:linear-gradient(#D0D0D0 1px,transparent 1px);background-size:16px 16px;background-position:0 -1px"></div>
<div style="left:160px;top:130px;width:771px;height:1px;background-image:linear-gradient(90deg,#D0D0D0 1px,transparent 1px);background-size:16px 16px;background-position:-1px 0"></div>
<svg id="conn" style="left:0;top:0" width="953" height="651">
<path d="M347.5 210.5 L357.0 210.5 Q359.5 210.5 359.5 213.0 L359.5 248.0 Q359.5 250.5 357.0 250.5 L202.0 250.5 Q199.5 250.5 199.5 253.0 L199.5 288.0 Q199.5 290.5 202.0 290.5 L206.5 290.5"/>
<polygon class="ah" points="207.2,290.5 203,287.9 203,293.1"/>
<path d="M347.5 322.5 L357.0 322.5 Q359.5 322.5 359.5 325.0 L359.5 360.0 Q359.5 362.5 357.0 362.5 L202.0 362.5 Q199.5 362.5 199.5 365.0 L199.5 400.0 Q199.5 402.5 202.0 402.5 L206.5 402.5"/>
<polygon class="ah" points="207.2,402.5 203,399.9 203,405.1"/>
<path d="M347.5 434.5 L357.0 434.5 Q359.5 434.5 359.5 437.0 L359.5 472.0 Q359.5 474.5 357.0 474.5 L202.0 474.5 Q199.5 474.5 199.5 477.0 L199.5 512.0 Q199.5 514.5 202.0 514.5 L206.5 514.5"/>
<polygon class="ah" points="207.2,514.5 203,511.9 203,517.1"/>
<path d="M347.5 306.5 L382.5 306.5"/>
<polygon class="ah" points="383.2,306.5 379,303.9 379,309.1"/>
<path d="M347.5 418.5 L382.5 418.5"/>
<polygon class="ah" points="383.2,418.5 379,415.9 379,421.1"/>
<path d="M347.5 530.5 L382.5 530.5"/>
<polygon class="ah" points="383.2,530.5 379,527.9 379,533.1"/>
<path d="M523.5 322.5 L558.5 322.5"/>
<polygon class="ah" points="559.2,322.5 555,319.9 555,325.1"/>
<path d="M523.5 546.5 L549.0 546.5 Q551.5 546.5 551.5 544.0 L551.5 322.5"/>
<path d="M523.5 434.5 L551.5 434.5"/>
<circle class="jd" cx="551.5" cy="432.5" r="2.2"/>
<path d="M347.5 546.5 L365.0 546.5 Q367.5 546.5 367.5 544.0 L367.5 397.0 Q367.5 394.5 370.0 394.5 L551.5 394.5"/>
<circle class="jd" cx="551.5" cy="392.5" r="2.2"/>
<path d="M699.5 338.5 L734.5 338.5"/>
<polygon class="ah" points="735.2,338.5 731,335.9 731,341.1"/>
<path d="M699.5 354.5 L727.5 354.5"/>
<circle class="jd" cx="727.5" cy="352.5" r="2.2"/>
<path d="M699.5 370.5 L727.5 370.5"/>
<circle class="jd" cx="727.5" cy="368.5" r="2.2"/>
<path d="M699.5 386.5 L725.0 386.5 Q727.5 386.5 727.5 384.0 L727.5 301.0 Q727.5 298.5 730.0 298.5 L885.0 298.5 Q887.5 298.5 887.5 296.0 L887.5 213.0 Q887.5 210.5 885.0 210.5 L875.5 210.5"/>
</svg>
<div class="blk" style="left:208px;top:179px;height:59px">
<div class="bi"><svg width="20" height="20" viewBox="0 0 20 20" ><rect x="5" y="2" width="9" height="16" rx="2" fill="#000"/><circle cx="9.5" cy="5" r="2.2" fill="#90004a"/><circle cx="9.5" cy="10" r="2.2" fill="#b06080"/><circle cx="9.5" cy="15" r="2.6" fill="#00f020"/></svg></div>
<div class="bh">Start rule</div>
<div class="br" style="top:26px;letter-spacing:0px">Start script</div>
<div class="bc" style="top:26px"><svg width="16" height="15" viewBox="0 0 16 15" ><path d="M2 6 L5.5 9 L13 2 L14.5 3.2 L5.5 12 L2 8.4 Z" fill="#808000"/></svg></div>
<div class="bf" style="top:42px;letter-spacing:0px">Start</div>
</div>
<div class="blk" style="left:208px;top:275px;height:75px">
<div class="bi"><svg width="20" height="20" viewBox="0 0 20 20" ><path d="M7 3 L5.500 3 C2.200 5.500 2.200 14.500 5.500 17 L7 17 L7 14.200 L6.200 13.200 L6.200 6.800 L7 5.800 Z" fill="#000080"/><rect x="7.4" y="3" width="1.2" height="3.6" fill="#000080"/><rect x="7.4" y="13.4" width="1.2" height="3.6" fill="#000080"/><path d="M10 8 L17.600 8 L17.600 7 L16.200 6 L15.600 3 L14.600 3 L13.800 4.500 L13 3 L12 3 L11.400 6 L10 7 Z" fill="#800080"/><text x="13.800" y="13.300" font-size="7" font-weight="bold" fill="#d00000" text-anchor="middle" font-family="Liberation Sans, sans-serif">?</text><path d="M9 17.500 L9 15.500 L10.500 13.500 L12.500 13 L13.800 15.200 L15 13 L17 13.500 L18.500 15.500 L18.500 17.500 Z" fill="#800080"/></svg></div>
<div class="bh" style="letter-spacing:-0.45px">Room 300 ?</div>
<div class="br" style="top:26px;letter-spacing:0px">True</div>
<div class="bc" style="top:26px"><svg width="16" height="15" viewBox="0 0 16 15" ><path d="M2 6 L5.5 9 L13 2 L14.5 3.2 L5.5 12 L2 8.4 Z" fill="#808000"/></svg></div>
<div class="br" style="top:42px;letter-spacing:0px">False</div>
<div class="bc" style="top:42px"><svg width="16" height="15" viewBox="0 0 16 15" ><path d="M2 2.5 L14 13.5 M14 2.5 L2 13.5" stroke="#a00000" stroke-width="1.3" fill="none"/></svg></div>
<div class="bf" style="top:58px;letter-spacing:0px">Call</div>
</div>
<div class="blk" style="left:208px;top:387px;height:75px">
<div class="bi"><svg width="20" height="20" viewBox="0 0 20 20" ><path d="M7 3 L5.500 3 C2.200 5.500 2.200 14.500 5.500 17 L7 17 L7 14.200 L6.200 13.200 L6.200 6.800 L7 5.800 Z" fill="#000080"/><rect x="7.4" y="3" width="1.2" height="3.6" fill="#000080"/><rect x="7.4" y="13.4" width="1.2" height="3.6" fill="#000080"/><path d="M10 8 L17.600 8 L17.600 7 L16.200 6 L15.600 3 L14.600 3 L13.800 4.500 L13 3 L12 3 L11.400 6 L10 7 Z" fill="#800080"/><text x="13.800" y="13.300" font-size="7" font-weight="bold" fill="#d00000" text-anchor="middle" font-family="Liberation Sans, sans-serif">?</text><path d="M9 17.500 L9 15.500 L10.500 13.500 L12.500 13 L13.800 15.200 L15 13 L17 13.500 L18.500 15.500 L18.500 17.500 Z" fill="#800080"/></svg></div>
<div class="bh" style="letter-spacing:-0.45px">Room 301 ?</div>
<div class="br" style="top:26px;letter-spacing:0px">True</div>
<div class="bc" style="top:26px"><svg width="16" height="15" viewBox="0 0 16 15" ><path d="M2 6 L5.5 9 L13 2 L14.5 3.2 L5.5 12 L2 8.4 Z" fill="#808000"/></svg></div>
<div class="br" style="top:42px;letter-spacing:0px">False</div>
<div class="bc" style="top:42px"><svg width="16" height="15" viewBox="0 0 16 15" ><path d="M2 2.5 L14 13.5 M14 2.5 L2 13.5" stroke="#a00000" stroke-width="1.3" fill="none"/></svg></div>
<div class="bf" style="top:58px;letter-spacing:0px">Call</div>
</div>
<div class="blk" style="left:208px;top:499px;height:75px">
<div class="bi"><svg width="20" height="20" viewBox="0 0 20 20" ><path d="M7 3 L5.500 3 C2.200 5.500 2.200 14.500 5.500 17 L7 17 L7 14.200 L6.200 13.200 L6.200 6.800 L7 5.800 Z" fill="#000080"/><rect x="7.4" y="3" width="1.2" height="3.6" fill="#000080"/><rect x="7.4" y="13.4" width="1.2" height="3.6" fill="#000080"/><path d="M10 8 L17.600 8 L17.600 7 L16.200 6 L15.600 3 L14.600 3 L13.800 4.500 L13 3 L12 3 L11.400 6 L10 7 Z" fill="#800080"/><text x="13.800" y="13.300" font-size="7" font-weight="bold" fill="#d00000" text-anchor="middle" font-family="Liberation Sans, sans-serif">?</text><path d="M9 17.500 L9 15.500 L10.500 13.500 L12.500 13 L13.800 15.200 L15 13 L17 13.500 L18.500 15.500 L18.500 17.500 Z" fill="#800080"/></svg></div>
<div class="bh" style="letter-spacing:-0.45px">Room 302 ?</div>
<div class="br" style="top:26px;letter-spacing:0px">True</div>
<div class="bc" style="top:26px"><svg width="16" height="15" viewBox="0 0 16 15" ><path d="M2 6 L5.5 9 L13 2 L14.5 3.2 L5.5 12 L2 8.4 Z" fill="#808000"/></svg></div>
<div class="br" style="top:42px;letter-spacing:0px">False</div>
<div class="bc" style="top:42px"><svg width="16" height="15" viewBox="0 0 16 15" ><path d="M2 2.5 L14 13.5 M14 2.5 L2 13.5" stroke="#a00000" stroke-width="1.3" fill="none"/></svg></div>
<div class="bf" style="top:58px;letter-spacing:0px">Call</div>
</div>
<div class="blk" style="left:384px;top:291px;height:59px">
<div class="bi"><svg width="20" height="20" viewBox="0 0 20 20" ><rect x="3" y="3" width="14" height="11" fill="#0000a0"/><text x="10" y="11.2" font-size="7.5" font-weight="bold" fill="#fff" text-anchor="middle" font-family="Liberation Sans, sans-serif">VB</text><rect x="6" y="14" width="1" height="3" fill="#000"/><rect x="10" y="14" width="1" height="3" fill="#000"/><rect x="14" y="14" width="1" height="3" fill="#000"/></svg></div>
<div class="bh" style="letter-spacing:-0.26px">Script Room 300</div>
<div class="br" style="top:26px;letter-spacing:0px">Default</div>
<div class="bc" style="top:26px"><svg width="16" height="15" viewBox="0 0 16 15" ><path d="M2 6 L5.5 9 L13 2 L14.5 3.2 L5.5 12 L2 8.4 Z" fill="#808000"/></svg></div>
<div class="bf" style="top:42px;letter-spacing:-0.06px">Insert Script Code</div>
</div>
<div class="blk" style="left:384px;top:403px;height:59px">
<div class="bi"><svg width="20" height="20" viewBox="0 0 20 20" ><rect x="3" y="3" width="14" height="11" fill="#0000a0"/><text x="10" y="11.2" font-size="7.5" font-weight="bold" fill="#fff" text-anchor="middle" font-family="Liberation Sans, sans-serif">VB</text><rect x="6" y="14" width="1" height="3" fill="#000"/><rect x="10" y="14" width="1" height="3" fill="#000"/><rect x="14" y="14" width="1" height="3" fill="#000"/></svg></div>
<div class="bh" style="letter-spacing:-0.26px">Script Room 301</div>
<div class="br" style="top:26px;letter-spacing:0px">Default</div>
<div class="bc" style="top:26px"><svg width="16" height="15" viewBox="0 0 16 15" ><path d="M2 6 L5.5 9 L13 2 L14.5 3.2 L5.5 12 L2 8.4 Z" fill="#808000"/></svg></div>
<div class="bf" style="top:42px;letter-spacing:-0.06px">Insert Script Code</div>
</div>
<div class="blk" style="left:384px;top:515px;height:59px">
<div class="bi"><svg width="20" height="20" viewBox="0 0 20 20" ><rect x="3" y="3" width="14" height="11" fill="#0000a0"/><text x="10" y="11.2" font-size="7.5" font-weight="bold" fill="#fff" text-anchor="middle" font-family="Liberation Sans, sans-serif">VB</text><rect x="6" y="14" width="1" height="3" fill="#000"/><rect x="10" y="14" width="1" height="3" fill="#000"/><rect x="14" y="14" width="1" height="3" fill="#000"/></svg></div>
<div class="bh" style="letter-spacing:-0.26px">Script Room 302</div>
<div class="br" style="top:26px;letter-spacing:0px">Default</div>
<div class="bc" style="top:26px"><svg width="16" height="15" viewBox="0 0 16 15" ><path d="M2 6 L5.5 9 L13 2 L14.5 3.2 L5.5 12 L2 8.4 Z" fill="#808000"/></svg></div>
<div class="bf" style="top:42px;letter-spacing:-0.06px">Insert Script Code</div>
</div>
<div class="blk" style="left:560px;top:307px;height:107px">
<div class="bi"><svg width="20" height="20" viewBox="0 0 20 20" ><g transform="translate(1,0)"><path d="M7 3 L5.500 3 C2.200 5.500 2.200 14.500 5.500 17 L7 17 L7 14.200 L6.200 13.200 L6.200 6.800 L7 5.800 Z" fill="#000080"/><rect x="7.4" y="3" width="1.2" height="3.6" fill="#000080"/><rect x="7.4" y="13.4" width="1.2" height="3.6" fill="#000080"/></g><path d="M10.500 8 L15 8 L13.600 9.400 L17 12.800 L16 13.800 L12.600 10.400 L10.500 12.500 Z" fill="#000"/></svg></div>
<div class="bh" style="letter-spacing:-0.16px">Original destination</div>
<div class="br" style="top:26px;letter-spacing:0px">Connected</div>
<div class="bc" style="top:26px"><svg width="16" height="15" viewBox="0 0 16 15" ><path d="M2 6 L5.5 9 L13 2 L14.5 3.2 L5.5 12 L2 8.4 Z" fill="#808000"/></svg></div>
<div class="br" style="top:42px;letter-spacing:0px">Timeout</div>
<div class="bc" style="top:42px"><svg width="16" height="15" viewBox="0 0 16 15" ><circle cx="8" cy="8.5" r="5" fill="none" stroke="#000" stroke-width="1.4"/><path d="M8 5.5 L8 9" stroke="#000" stroke-width="1.2"/><path d="M2 4.5 Q3 1 6 2.5 M14 4.5 Q13 1 10 2.5" stroke="#000" stroke-width="1.4" fill="none"/></svg></div>
<div class="br" style="top:58px;letter-spacing:0px">Busy</div>
<div class="bc" style="top:58px"><svg width="16" height="15" viewBox="0 0 16 15" ><circle cx="8" cy="5" r="3.600" fill="#f00000"/><rect x="6.500" y="7" width="3" height="3" fill="#f00000"/><path d="M1.500 14.500 Q1.500 10 6 9.300 L10 9.300 Q14.500 10 14.500 14.500 Z" fill="#f00000"/></svg></div>
<div class="br" style="top:74px;letter-spacing:0px">Not delivered</div>
<div class="bc" style="top:74px"><svg width="16" height="15" viewBox="0 0 16 15" ><circle cx="8" cy="5" r="3.600" fill="#808080"/><rect x="6.500" y="7" width="3" height="3" fill="#808080"/><path d="M1.500 14.500 Q1.500 10 6 9.300 L10 9.300 Q14.500 10 14.500 14.500 Z" fill="#808080"/></svg></div>
<div class="bf" style="top:90px;letter-spacing:-0.08px">Connect To</div>
</div>
<div class="blk" style="left:736px;top:179px;height:59px">
<div class="bi"><svg width="20" height="20" viewBox="0 0 20 20" ><rect x="8" y="3" width="9" height="5" fill="#000"/><rect x="9" y="4" width="7" height="1" fill="#000"/><rect x="9" y="5.6" width="7" height="1" fill="#fff"/><path d="M9 9 L16 9 L16 13 L14.5 15 L10.5 15 L9 13 Z" fill="#000"/><path d="M10 10 L15 10 L15 12.6 L14 14 L11 14 L10 12.6 Z" fill="#909090"/><rect x="12" y="15" width="1" height="3" fill="#000"/><rect x="5" y="9" width="1" height="6" fill="#000"/><path d="M2.5 14 L8.5 14 L5.5 17.5 Z" fill="#000"/></svg></div>
<div class="bh" style="letter-spacing:-0.25px">Disconnected</div>
<div class="br" style="top:26px;letter-spacing:-0.25px">Disconnected</div>
<div class="bc" style="top:26px"><svg width="16" height="15" viewBox="0 0 16 15" ><g transform="translate(-2,-2)"><rect x="8" y="3" width="9" height="5" fill="#000"/><rect x="9" y="4" width="7" height="1" fill="#800080"/><rect x="9" y="5.6" width="7" height="1" fill="#f8a0f8"/><path d="M9 9 L16 9 L16 13 L14.5 15 L10.5 15 L9 13 Z" fill="#000"/><path d="M10 10 L15 10 L15 12.6 L14 14 L11 14 L10 12.6 Z" fill="#909090"/><rect x="12" y="15" width="1" height="3" fill="#000"/><rect x="5" y="9" width="1" height="6" fill="#000"/><path d="M2.5 14 L8.5 14 L5.5 17.5 Z" fill="#000"/></g></svg></div>
<div class="bf" style="top:42px;letter-spacing:-0.25px">Disconnected</div>
</div>
<div class="blk" style="left:736px;top:323px;height:39px">
<div class="bi"><svg width="20" height="20" viewBox="0 0 20 20" ><path d="M8.5 3 L15 9.5 L8.5 16 L2 9.5 Z" fill="#000"/><rect x="7.5" y="5" width="2" height="2" fill="#fff"/><rect x="5.5" y="7" width="2" height="2" fill="#fff"/><rect x="9.5" y="7" width="2" height="2" fill="#fff"/><rect x="3.5" y="9" width="2" height="2" fill="#fff"/><rect x="7.5" y="9" width="2" height="2" fill="#fff"/><rect x="11.5" y="9" width="2" height="2" fill="#fff"/><rect x="5.5" y="11" width="2" height="2" fill="#fff"/><rect x="9.5" y="11" width="2" height="2" fill="#fff"/><rect x="7.5" y="13" width="2" height="2" fill="#fff"/><path d="M9 3 L18 12" stroke="#000" stroke-width="1.3" fill="none"/></svg></div>
<div class="bh" style="letter-spacing:-0.14px">Rule executed</div>
<div class="bf" style="top:22px;letter-spacing:-0.14px">Rule executed</div>
</div>
<div class="blk" style="left:736px;top:531px;height:39px">
<div class="bi"><svg width="20" height="20" viewBox="0 0 20 20" ><path d="M2.5 10 L11 2.5 L15.5 7" stroke="#a00000" stroke-width="1.8" fill="none"/><path d="M17.5 4 L17.5 9 L12.5 9 Z" fill="#c00000"/><rect x="7" y="10" width="9" height="7" fill="#000"/><rect x="8" y="11" width="7" height="1" fill="#fff"/><rect x="8" y="13" width="7" height="3" fill="#a0a0a0"/></svg></div>
<div class="bh" style="letter-spacing:-0.3px">Rule skipped</div>
<div class="bf" style="top:22px;letter-spacing:-0.3px">Rule skipped</div>
</div>
<!-- scrollbars -->
<div class="sb" style="left:931px;top:130px;width:16px;height:481px"></div>
<div class="sb" style="left:159px;top:611px;width:772px;height:16px"></div>
<div style="left:931px;top:611px;width:16px;height:16px;background:#ECE9D8"></div>
<div class="sbtn" style="left:931px;top:130px;width:15px;height:16px"><svg style="left:0;top:0" width="13" height="14"><g transform="rotate(0 6.5 7.0)"><path d="M3.0 8.8 L6.5 5.3 L10.0 8.8" fill="none" stroke="#fff" stroke-width="2"/></g></svg></div>
<div class="sbtn" style="left:931px;top:147px;width:15px;height:17px"><svg style="left:0;top:0" width="13" height="15" shape-rendering="crispEdges"><rect x="3" y="3" width="6" height="1" fill="#E0EEC4"/><rect x="3" y="5" width="6" height="1" fill="#E0EEC4"/><rect x="3" y="7" width="6" height="1" fill="#E0EEC4"/><rect x="3" y="9" width="6" height="1" fill="#E0EEC4"/></svg></div>
<div class="sbtn" style="left:931px;top:593px;width:15px;height:16px"><svg style="left:0;top:0" width="13" height="14"><g transform="rotate(180 6.5 7.0)"><path d="M3.0 8.8 L6.5 5.3 L10.0 8.8" fill="none" stroke="#fff" stroke-width="2"/></g></svg></div>
<div class="sbtn" style="left:159px;top:611px;width:16px;height:15px"><svg style="left:0;top:0" width="14" height="13"><g transform="rotate(270 7.0 6.5)"><path d="M3.5 8.3 L7.0 4.8 L10.5 8.3" fill="none" stroke="#fff" stroke-width="2"/></g></svg></div>
<div class="sbtn" style="left:176px;top:611px;width:47px;height:15px"><svg style="left:0;top:0" width="45" height="13" shape-rendering="crispEdges"><rect x="18" y="3" width="1" height="6" fill="#E0EEC4"/><rect x="20" y="3" width="1" height="6" fill="#E0EEC4"/><rect x="22" y="3" width="1" height="6" fill="#E0EEC4"/><rect x="24" y="3" width="1" height="6" fill="#E0EEC4"/></svg></div>
<div class="sbtn" style="left:913px;top:611px;width:16px;height:15px"><svg style="left:0;top:0" width="14" height="13"><g transform="rotate(90 7.0 6.5)"><path d="M3.5 8.3 L7.0 4.8 L10.5 8.3" fill="none" stroke="#fff" stroke-width="2"/></g></svg></div>
<div class="sb" style="left:9px;top:605px;width:139px;height:17px"></div>
<div class="sbtn" style="left:10px;top:605px;width:16px;height:15px"><svg style="left:0;top:0" width="14" height="13"><g transform="rotate(270 7.0 6.5)"><path d="M3.5 8.3 L7.0 4.8 L10.5 8.3" fill="none" stroke="#fff" stroke-width="2"/></g></svg></div>
<div class="sbtn" style="left:27px;top:605px;width:67px;height:15px"><svg style="left:0;top:0" width="65" height="13" shape-rendering="crispEdges"><rect x="28" y="3" width="1" height="6" fill="#E0EEC4"/><rect x="30" y="3" width="1" height="6" fill="#E0EEC4"/><rect x="32" y="3" width="1" height="6" fill="#E0EEC4"/><rect x="34" y="3" width="1" height="6" fill="#E0EEC4"/></svg></div>
<div class="sbtn" style="left:129px;top:605px;width:16px;height:15px"><svg style="left:0;top:0" width="14" height="13"><g transform="rotate(90 7.0 6.5)"><path d="M3.5 8.3 L7.0 4.8 L10.5 8.3" fill="none" stroke="#fff" stroke-width="2"/></g></svg></div>

<div style="left:4px;top:627px;width:154px;height:1px;background:#B8B5A4"></div>
<!-- status bar -->
<div class="tr" style="left:6px;top:631px;letter-spacing:-0.2px">Press F1 for Help</div>
<div class="sp" style="left:511px;width:290px;"></div><div class="tr" style="left:524px;top:631px;letter-spacing:-0.05px">The script contains 0 error(s) and 1 warning(s)</div>
<div class="sp" style="left:804px;width:48px"></div>
<div class="sp" style="left:855px;width:74px"></div>
<svg style="left:934px;top:632px" width="14" height="14"><path d="M13.500 2.500 L2.500 13.500 M13.500 6.500 L6.500 13.500 M13.500 10.500 L10.500 13.500" stroke="#8C887A" stroke-width="1.200"/><path d="M14.500 2.500 L3.500 13.500 M14.500 6.500 L7.500 13.500 M14.500 10.500 L11.500 13.500" stroke="#fff" stroke-width=".8"/></svg>
</body></html>
